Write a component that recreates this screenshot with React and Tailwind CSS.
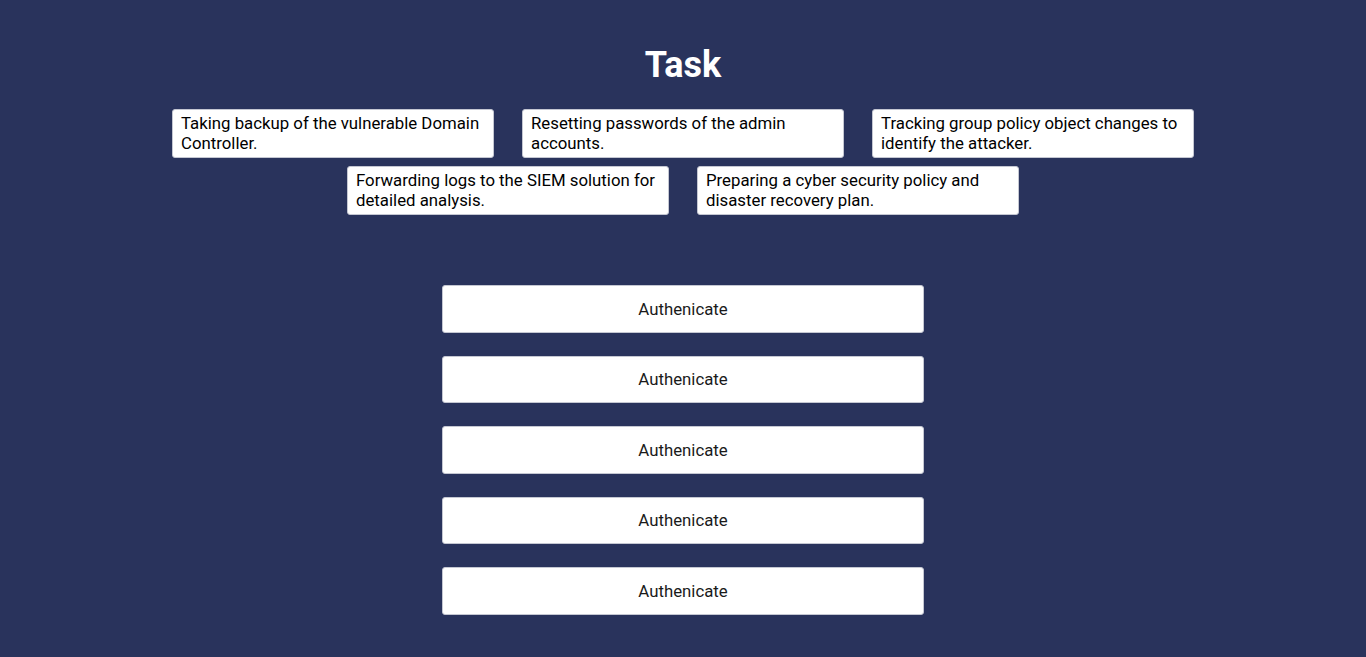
import React from 'react';

const tasks = [
  'Taking backup of the vulnerable Domain Controller.',
  'Resetting passwords of the admin accounts.',
  'Tracking group policy object changes to identify the attacker.',
  'Forwarding logs to the SIEM solution for detailed analysis.',
  'Preparing a cyber security policy and disaster recovery plan.',
];

const App = () => {
  return (
    <div className="min-h-[657px] bg-[#29335c] pt-[45px] font-['Roboto',sans-serif]">
      <h1 className="text-center text-[36px] leading-[40px] font-bold text-white">Task</h1>

      {/* Task cards */}
      <div className="mx-auto mt-[24px] flex w-[1050px] flex-wrap justify-center gap-y-[8px]">
        {tasks.map((task) => (
          <div
            key={task}
            className="mx-[14px] h-[49px] w-[322px] rounded-[3px] border border-[#c4c7d2] bg-white px-[8px] pt-[3px] text-[16.8px] leading-[20px] text-black"
          >
            {task}
          </div>
        ))}
      </div>

      {/* Drop zones */}
      <div className="mx-auto mt-[70px] flex w-[482px] flex-col gap-[23px]">
        {[1, 2, 3, 4, 5].map((n) => (
          <div
            key={n}
            className="flex h-[47.5px] items-center justify-center rounded-[3px] border border-[#c4c7d2] bg-white pt-[1px] text-[16.8px] text-[#1a1a1a]"
          >
            Authenicate
          </div>
        ))}
      </div>
    </div>
  );
};

export default App;
